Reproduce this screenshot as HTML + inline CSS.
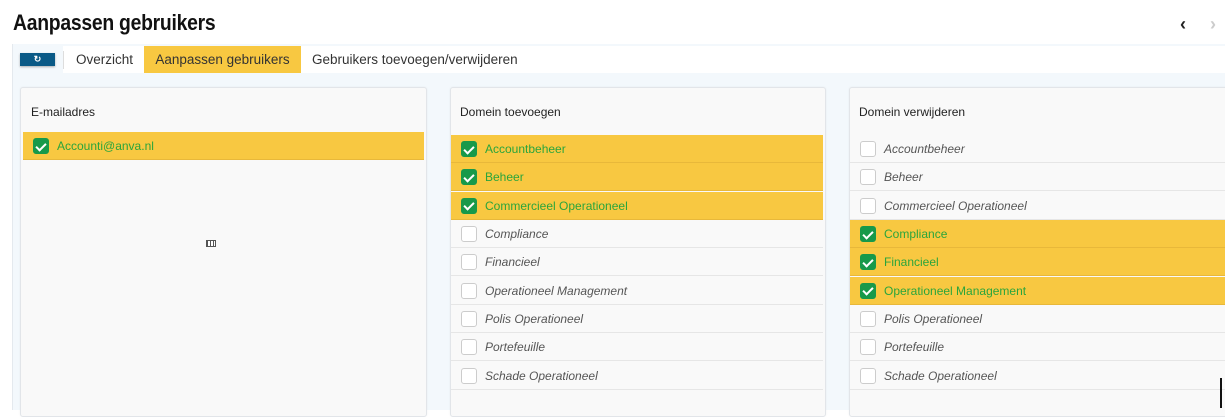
<!DOCTYPE html>
<html><head><meta charset="utf-8"><style>
*{box-sizing:border-box;margin:0;padding:0}
body{width:1225px;height:410px;overflow:hidden;background:#fff;font-family:"Liberation Sans",sans-serif;position:relative}
.abs{position:absolute}
h1{position:absolute;left:13px;top:10px;font-size:22px;font-weight:bold;color:#111;letter-spacing:-0.3px;transform:scaleX(0.88);transform-origin:left}
.content{position:absolute;left:12px;top:44px;width:1213px;height:366px;background:#f3f8fc;border-left:1px solid #e4e9ee}
.tabs{position:absolute;left:63px;top:46px;width:1162px;height:27px;background:#fff}
.tab{position:absolute;top:46px;height:27px;line-height:27px;font-size:13.5px;color:#333}
.panel{position:absolute;top:87px;height:330px;background:#f9f9f9;border:1px solid #e2e5e9;border-radius:3px;box-shadow:0 0 2px rgba(0,0,0,.05)}
.ph{position:absolute;top:17px;font-size:12px;color:#222}
.row{position:absolute;left:0;right:0;height:28px;border-bottom:1px solid #e6e6e6;font-size:12px;color:#555;font-style:italic}
.row.on{background:#f8c841;border-bottom:1px solid #e8b83a;color:#2aa53c;font-style:normal}
.cb{position:absolute;left:10px;top:6px;width:16px;height:16px;border:1px solid #ccc;border-radius:3px;background:#fff}
.on .cb{background:#17994a;border-color:#17994a}
.on .cb:after{content:"";position:absolute;left:4px;top:1.5px;width:4px;height:8px;border:solid #fff;border-width:0 2px 2px 0;transform:rotate(45deg)}
.lbl{position:absolute;left:34px;top:7px}
</style></head><body>
<h1>Aanpassen gebruikers</h1>
<div class="abs" style="left:1180px;top:14px;font-size:18px;font-weight:bold;color:#222">&#8249;</div>
<div class="abs" style="left:1210px;top:14px;font-size:18px;font-weight:bold;color:#ccc">&#8250;</div>
<div class="content"></div>
<div class="tabs"></div>
<div class="abs" style="left:20px;top:53px;width:35px;height:13px;background:#0a5a87;box-shadow:0 1px 2px rgba(0,0,0,.3);color:#fff;font-size:9px;line-height:13px;text-align:center;font-weight:bold">&#8635;</div>
<div class="abs" style="left:63px;top:51px;width:1px;height:18px;background:#ddd"></div>
<div class="tab" style="left:76px">Overzicht</div>
<div class="tab" style="left:144px;width:157px;background:#f8c841;text-align:center">Aanpassen gebruikers</div>
<div class="tab" style="left:312px">Gebruikers toevoegen/verwijderen</div>

<div class="panel" style="left:20px;width:407px">
<div class="ph" style="left:10px">E-mailadres</div>
<div class="row on" style="top:44px;left:2px;right:2px"><div class="cb"></div><div class="lbl">Accounti@anva.nl</div></div>
<div class="abs" style="left:185px;top:152px;width:10px;height:7px;border:1px solid #555;background:repeating-linear-gradient(90deg,#555 0 1px,#fff 1px 3px)"></div>
</div>

<div class="panel" style="left:450px;width:376px">
<div class="ph" style="left:9px;top:17px">Domein toevoegen</div>
<div style="position:absolute;left:0;right:2px;top:47px">
<div class="row on" style="top:0"><div class="cb"></div><div class="lbl">Accountbeheer</div></div>
<div class="row on" style="top:28.3px"><div class="cb"></div><div class="lbl">Beheer</div></div>
<div class="row on" style="top:56.6px"><div class="cb"></div><div class="lbl">Commercieel Operationeel</div></div>
<div class="row" style="top:85px"><div class="cb"></div><div class="lbl">Compliance</div></div>
<div class="row" style="top:113.3px"><div class="cb"></div><div class="lbl">Financieel</div></div>
<div class="row" style="top:141.6px"><div class="cb"></div><div class="lbl">Operationeel Management</div></div>
<div class="row" style="top:170px"><div class="cb"></div><div class="lbl">Polis Operationeel</div></div>
<div class="row" style="top:198.3px"><div class="cb"></div><div class="lbl">Portefeuille</div></div>
<div class="row" style="top:226.6px"><div class="cb"></div><div class="lbl">Schade Operationeel</div></div>
</div></div>

<div class="panel" style="left:849px;width:380px">
<div class="ph" style="left:9px;top:17px">Domein verwijderen</div>
<div style="position:absolute;left:0;right:0;top:47px">
<div class="row" style="top:0"><div class="cb"></div><div class="lbl">Accountbeheer</div></div>
<div class="row" style="top:28.3px"><div class="cb"></div><div class="lbl">Beheer</div></div>
<div class="row" style="top:56.6px"><div class="cb"></div><div class="lbl">Commercieel Operationeel</div></div>
<div class="row on" style="top:85px"><div class="cb"></div><div class="lbl">Compliance</div></div>
<div class="row on" style="top:113.3px"><div class="cb"></div><div class="lbl">Financieel</div></div>
<div class="row on" style="top:141.6px"><div class="cb"></div><div class="lbl">Operationeel Management</div></div>
<div class="row" style="top:170px"><div class="cb"></div><div class="lbl">Polis Operationeel</div></div>
<div class="row" style="top:198.3px"><div class="cb"></div><div class="lbl">Portefeuille</div></div>
<div class="row" style="top:226.6px"><div class="cb"></div><div class="lbl">Schade Operationeel</div></div>
</div></div>
<div class="abs" style="left:1220px;top:378px;width:2px;height:30px;background:#111"></div>
</body></html>
